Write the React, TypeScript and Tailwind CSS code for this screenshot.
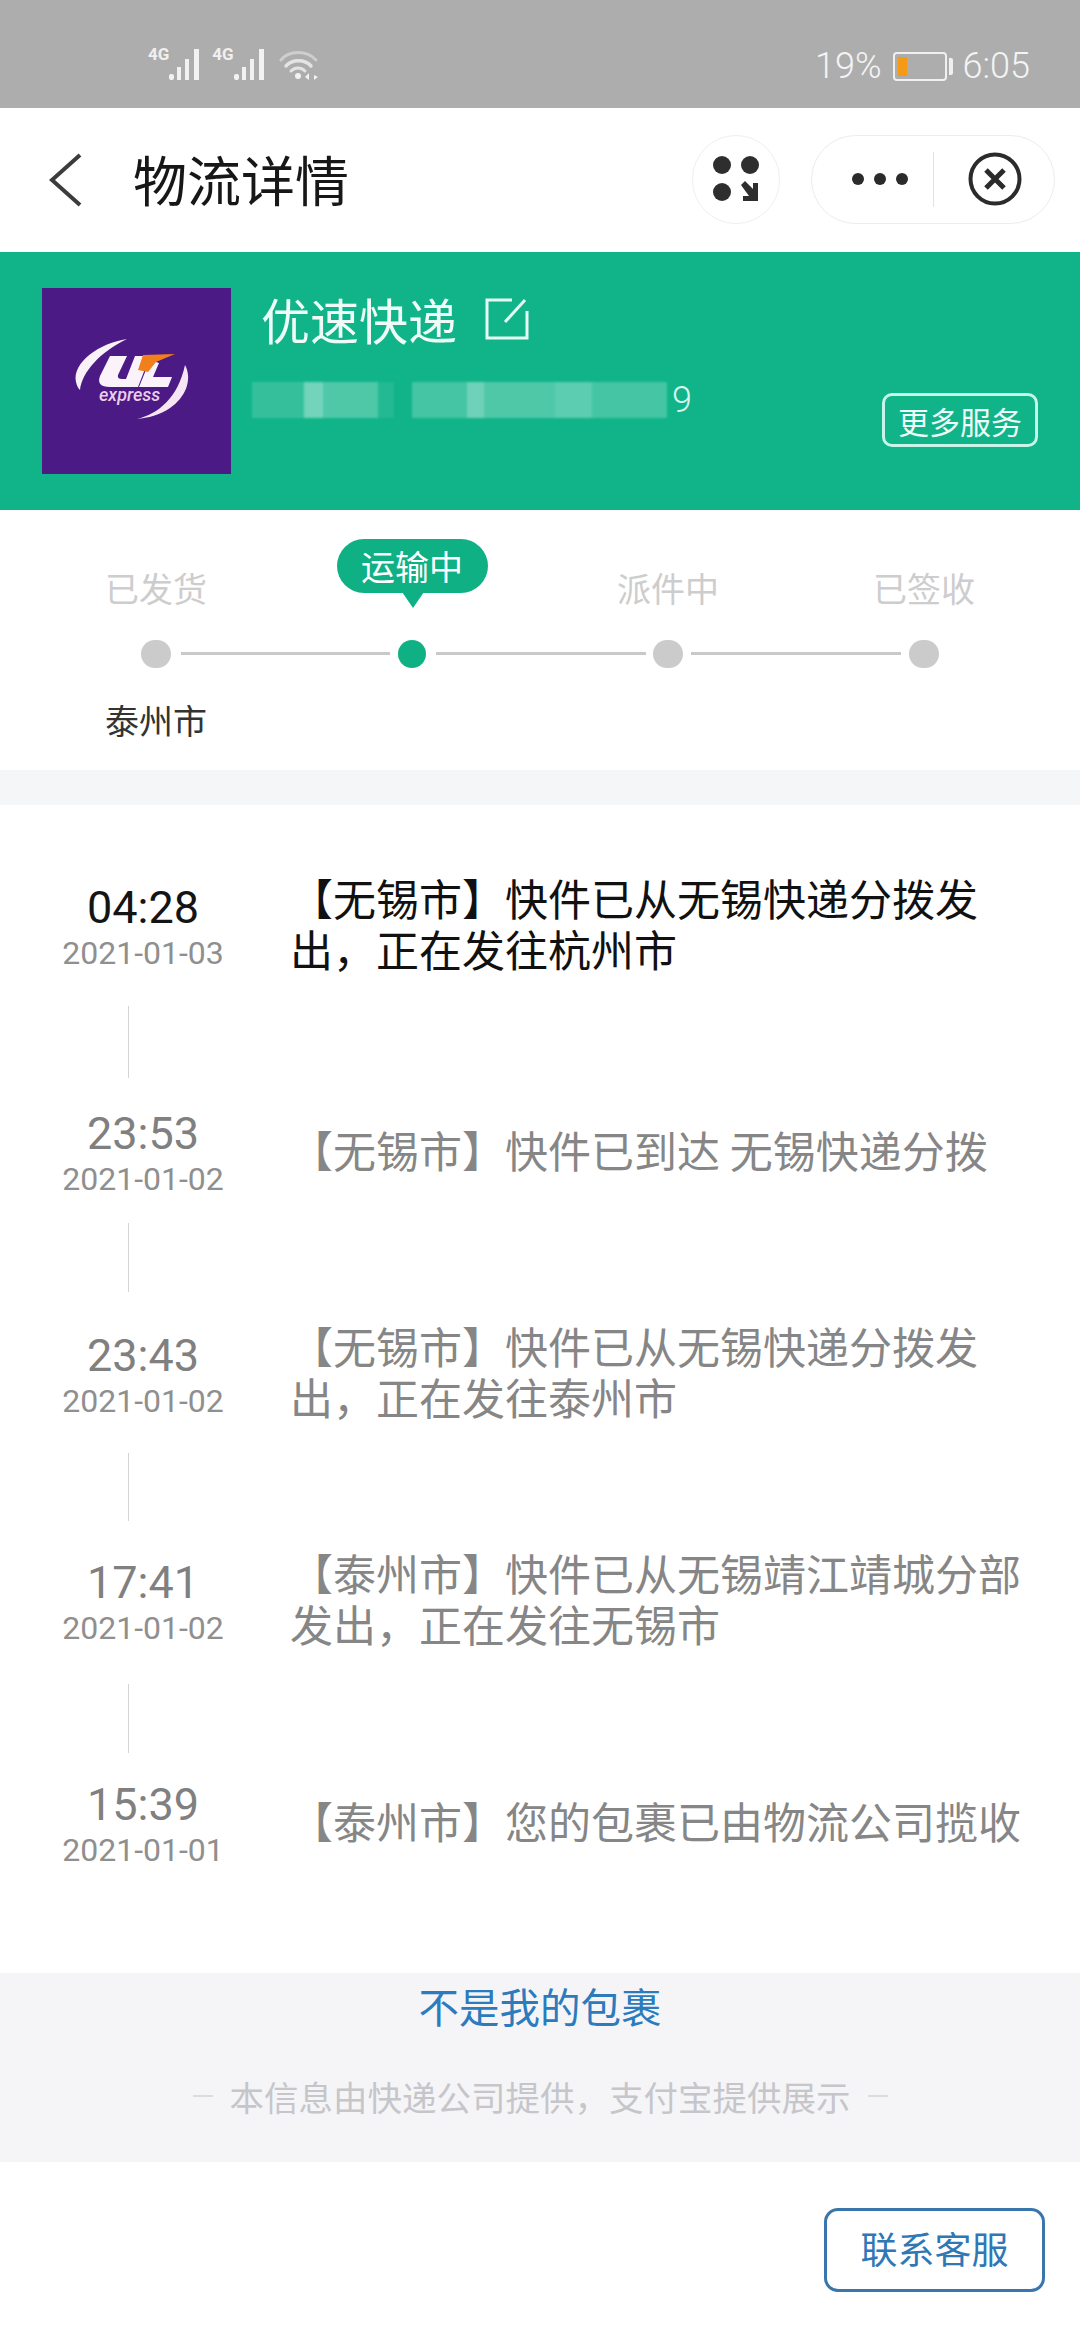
const sans = "font-['Noto_Sans_CJK_SC','Noto_Sans',sans-serif]";

const steps = [
  { label: '已发货', active: false },
  { label: '运输中', active: true },
  { label: '派件中', active: false },
  { label: '已签收', active: false },
];

const records = [
  {
    time: '04:28',
    date: '2021-01-03',
    text: '【无锡市】快件已从无锡快递分拨发出，正在发往杭州市',
    timeColor: 'text-[#141414]',
    textColor: 'text-[#111111]',
    line: 'mt-[28px] mb-[26px] h-[72px]',
  },
  {
    time: '23:53',
    date: '2021-01-02',
    text: '【无锡市】快件已到达 无锡快递分拨',
    timeColor: 'text-[#808080]',
    textColor: 'text-[#868686]',
    line: 'mt-[19px] mb-[34px] h-[69px]',
  },
  {
    time: '23:43',
    date: '2021-01-02',
    text: '【无锡市】快件已从无锡快递分拨发出，正在发往泰州市',
    timeColor: 'text-[#808080]',
    textColor: 'text-[#868686]',
    line: 'mt-[27px] mb-[32px] h-[68px]',
  },
  {
    time: '17:41',
    date: '2021-01-02',
    text: '【泰州市】快件已从无锡靖江靖城分部发出，正在发往无锡市',
    timeColor: 'text-[#808080]',
    textColor: 'text-[#868686]',
    line: 'mt-[31px] mb-[22px] h-[69px]',
  },
  {
    time: '15:39',
    date: '2021-01-01',
    text: '【泰州市】您的包裹已由物流公司揽收',
    timeColor: 'text-[#808080]',
    textColor: 'text-[#868686]',
    line: '',
  },
];

function Signal() {
  return (
    <div className="flex items-start">
      <span className="font-['Roboto',sans-serif] text-[17px] leading-[18px] font-bold text-[#f0f0f0] mt-[-2px]">4G</span>
      <svg width="36" height="36" viewBox="0 0 36 36" fill="#f2f2f2" className="ml-[-1px]">
        <rect x="1" y="27" width="5" height="6" rx="2" />
        <rect x="9" y="20" width="4" height="13" />
        <rect x="17" y="12" width="4" height="21" />
        <rect x="26" y="2" width="5" height="31" />
      </svg>
    </div>
  );
}

function StatusBar() {
  return (
    <div className="h-[108px] bg-[#adadad] flex items-center pt-[24px] pl-[148px] pr-[50px] text-[#f4f4f4] font-['Roboto',sans-serif]">
      <div className="flex items-center gap-[8px] mt-[-2px]">
        <Signal />
        <Signal />
        <svg width="40" height="36" viewBox="0 0 40 36" fill="none" stroke="#e4e4e4" strokeLinecap="round" className="ml-[2px]">
          <path d="M2 13 C10 3 28 3 37 13" strokeWidth="3" opacity="0.6" />
          <path d="M7 19 C13 12 26 12 32 19" strokeWidth="3.5" />
          <path d="M12 24 C16 20 22 20 26 24" strokeWidth="3" />
          <circle cx="19" cy="29" r="3" fill="#f2f2f2" stroke="none" />
          <path d="M30 26 L26 30 L30 33 Z M33 25 V34 M35 28 L39 30 L35 33 Z" fill="#f2f2f2" stroke="none" />
        </svg>
      </div>
      <div className="ml-auto flex items-center">
        <span className="text-[36px] font-light leading-none">19%</span>
        <div className="ml-[11px] w-[54px] h-[29px] border-2 border-[#f0f0f0] rounded-[4px] p-[3px] flex">
          <div className="w-[9px] bg-[#f59a14]" />
        </div>
        <div className="ml-[2px] w-[4px] h-[17px] bg-[#f0f0f0] rounded-r-[2px]" />
        <span className="ml-[10px] text-[36px] font-light leading-none">6:05</span>
      </div>
    </div>
  );
}

function NavBar() {
  return (
    <div className={`h-[144px] bg-white flex items-center ${sans}`}>
      <svg width="36" height="54" viewBox="0 0 36 54" fill="none" stroke="#3c3c3c" strokeWidth="4" className="ml-[47px] mt-[-1px]">
        <path d="M33 2 L5 27 L33 52" />
      </svg>
      <span className="ml-[50px] text-[54px] leading-none text-[#171717] mt-[-3px]">物流详情</span>
      <div className="ml-auto mr-[25px] flex items-center gap-[31px] mt-[-2px]">
        <div className="w-[88px] h-[89px] rounded-full border border-[#efefef] flex items-center justify-center">
          <svg width="46" height="48" viewBox="0 0 46 48" fill="#2e2e2e">
            <circle cx="9" cy="10" r="9" />
            <circle cx="37" cy="10" r="9" />
            <circle cx="9" cy="37" r="9" />
            <path d="M28 30 L32 26 L40 34 L40 28 L45 28 L45 46 L30 46 L30 41 L36 41 Z" />
          </svg>
        </div>
        <div className="w-[244px] h-[89px] rounded-full border border-[#ececec] flex items-center">
          <div className="w-[121px] flex justify-end gap-[10px] pr-[25px]">
            <span className="w-[12px] h-[12px] rounded-full bg-[#2b2b2b]" />
            <span className="w-[12px] h-[12px] rounded-full bg-[#2b2b2b]" />
            <span className="w-[12px] h-[12px] rounded-full bg-[#2b2b2b]" />
          </div>
          <div className="w-px h-[55px] bg-[#e3e3e3]" />
          <svg width="54" height="54" viewBox="0 0 54 54" fill="none" stroke="#2b2b2b" className="ml-[34px]">
            <circle cx="27" cy="27" r="24.5" strokeWidth="4" />
            <path d="M18 18 L36 36 M36 18 L18 36" strokeWidth="5" />
          </svg>
        </div>
      </div>
    </div>
  );
}

function CarrierLogo() {
  return (
    <div className="w-[189px] h-[186px] bg-[#4c1a84] pl-[18px] pt-[42px] shrink-0">
      <svg width="140" height="110" viewBox="0 0 140 110">
        <path d="M67 9 C40 13 12 32 16 52 C17 56 18 58 20 60 C22 42 40 22 67 9 Z" fill="#f9f1f8" />
        <path d="M125 35 C133 50 125 68 110 78 C100 85 88 88 77 89 C98 84 118 68 125 35 Z" fill="#f6e6f3" />
        <path d="M50 26 L67 26 L58 45 Q57 49 62 49 L66 49 L75 26 L90 26 L78 57 L50 57 Q36 57 40 46 Z" fill="#fbf3fa" />
        <path d="M90 30 L79 57 L108 57 L112 47 L93 47 L99 33 Z" fill="#fbf3fa" />
        <path d="M83 25 L115 24 L96 32 L88 42 L78 40 Z" fill="#f07f1c" />
        <text x="39" y="71" fontSize="18" fontStyle="italic" fill="#e8d0ea" fontFamily="Roboto, sans-serif" fontWeight="500">express</text>
      </svg>
    </div>
  );
}

function TrackingBlur() {
  // the number is pixelated out in the picture
  return (
    <div className="flex items-center h-[36px] mt-[34px] ml-[-9px]">
      <div className="flex h-[36px] items-stretch blur-[1px]">
        <div className="w-[52px] bg-[#35c09b]" />
        <div className="w-[19px] bg-[#74d4bb]" />
        <div className="w-[55px] bg-[#4fc8a8]" />
        <div className="w-[16px] bg-[#22b993]" />
        <div className="w-[18px] bg-[#10b488]" />
        <div className="w-[55px] bg-[#45c5a3]" />
        <div className="w-[17px] bg-[#6fd2b8]" />
        <div className="w-[71px] bg-[#4fc8a8]" />
        <div className="w-[37px] bg-[#5ccdb0]" />
        <div className="w-[75px] bg-[#45c5a3]" />
      </div>
      <span className="ml-[5px] font-['Roboto',sans-serif] text-[36px] leading-none font-light text-[#d6f6ee]">9</span>
    </div>
  );
}

function CarrierHeader() {
  return (
    <div className={`h-[258px] bg-[#10b488] flex items-start pt-[36px] pl-[42px] pr-[42px] ${sans}`}>
      <CarrierLogo />
      <div className="ml-[30px] flex-1 relative">
        <div className="flex items-center h-[60px]">
          <span className="text-[49px] leading-none text-[#eefbf7]">优速快递</span>
          <svg width="44" height="44" viewBox="0 0 44 44" fill="none" stroke="#e6f9f3" strokeWidth="3" className="ml-[28px] mt-[2px]">
            <path d="M27 3 H2 V41 H42 V14" />
            <path d="M40 3 L20 25" />
          </svg>
        </div>
        <TrackingBlur />
        <div className="absolute right-0 top-[105px] w-[156px] h-[54px] rounded-[10px] border-[3px] border-[#c8f5ea] flex items-center justify-center text-[31px] leading-none text-[#eefbf7]">
          更多服务
        </div>
      </div>
    </div>
  );
}

function Progress() {
  return (
    <div className={`h-[260px] bg-white relative ${sans}`}>
      <div className="grid grid-cols-4 w-[1024px] ml-[28px] pt-[30px]">
        {steps.map((s) => (
          <div key={s.label} className="flex flex-col items-center w-[256px]">
            <div className="h-[76px] flex items-end justify-center">
              {s.active ? (
                <div className="relative w-[151px] h-[54px] mb-[23px] rounded-[27px] bg-[#10b085] flex items-center justify-center text-[34px] leading-none text-white">
                  {s.label}
                  <div className="absolute bottom-[-15px] left-[65px] w-0 h-0 border-l-[11px] border-r-[11px] border-t-[16px] border-l-transparent border-r-transparent border-t-[#10b085]" />
                </div>
              ) : (
                <span className="text-[34px] leading-none text-[#cdcdcd] mb-[11px]">{s.label}</span>
              )}
            </div>
            <div className="mt-[24px] h-[28px] flex items-center justify-center">
              <span className={s.active ? 'w-[28px] h-[28px] rounded-full bg-[#10b085]' : 'w-[30px] h-[28px] rounded-full bg-[#cbcbcb]'} />
            </div>
          </div>
        ))}
      </div>
      <div className="absolute top-[142px] left-[181px] w-[209px] h-[3px] bg-[#c9c9c9]" />
      <div className="absolute top-[142px] left-[436px] w-[210px] h-[3px] bg-[#c9c9c9]" />
      <div className="absolute top-[142px] left-[691px] w-[210px] h-[3px] bg-[#c9c9c9]" />
      <div className="mt-[35px] w-[312px] text-center text-[34px] leading-none text-[#333333]">泰州市</div>
    </div>
  );
}

function Timeline() {
  return (
    <div className="pt-[73px]">
      {records.map((r) => (
        <div key={r.time}>
          <div className="h-[100px] flex items-center">
            <div className="w-[286px] shrink-0 text-center font-['Roboto',sans-serif]">
              <div className={`text-[45px] leading-[50px] ${r.timeColor}`}>{r.time}</div>
              <div className="text-[32px] leading-[40px] text-[#8f8f8f]">{r.date}</div>
            </div>
            <div className={`ml-[4px] w-[735px] text-[43px] leading-[51px] mt-[-10px] ${sans} ${r.textColor}`}>{r.text}</div>
          </div>
          {r.line && <div className={`ml-[128px] w-px bg-[#d4d4d4] ${r.line}`} />}
        </div>
      ))}
    </div>
  );
}

function Footer() {
  return (
    <div className={`mt-[98px] h-[189px] bg-[#f5f5f8] flex flex-col items-center ${sans}`}>
      <div className="mt-[13px] text-[40.5px] leading-[40px] text-[#2b7bbd]">不是我的包裹</div>
      <div className="mt-[47px] flex items-center text-[34.5px] leading-[46px] text-[#c6c6ca]">
        <span className="w-[20px] h-[2px] bg-[#dcdcdf]" />
        <span className="mx-[17px]">本信息由快递公司提供，支付宝提供展示</span>
        <span className="w-[20px] h-[2px] bg-[#dcdcdf]" />
      </div>
    </div>
  );
}

export default function App() {
  return (
    <div className="w-[1080px] h-[2340px] bg-white overflow-hidden flex flex-col">
      <StatusBar />
      <NavBar />
      <CarrierHeader />
      <Progress />
      <div className="h-[35px] bg-[#f5f6f7]" />
      <Timeline />
      <Footer />
      <div className="flex justify-end pt-[46px] pr-[35px]">
        <div className={`w-[221px] h-[84px] pb-[4px] border-[3px] border-[#3a76ab] rounded-[14px] flex items-center justify-center text-[37px] leading-none text-[#2f78b5] ${sans}`}>
          联系客服
        </div>
      </div>
    </div>
  );
}
